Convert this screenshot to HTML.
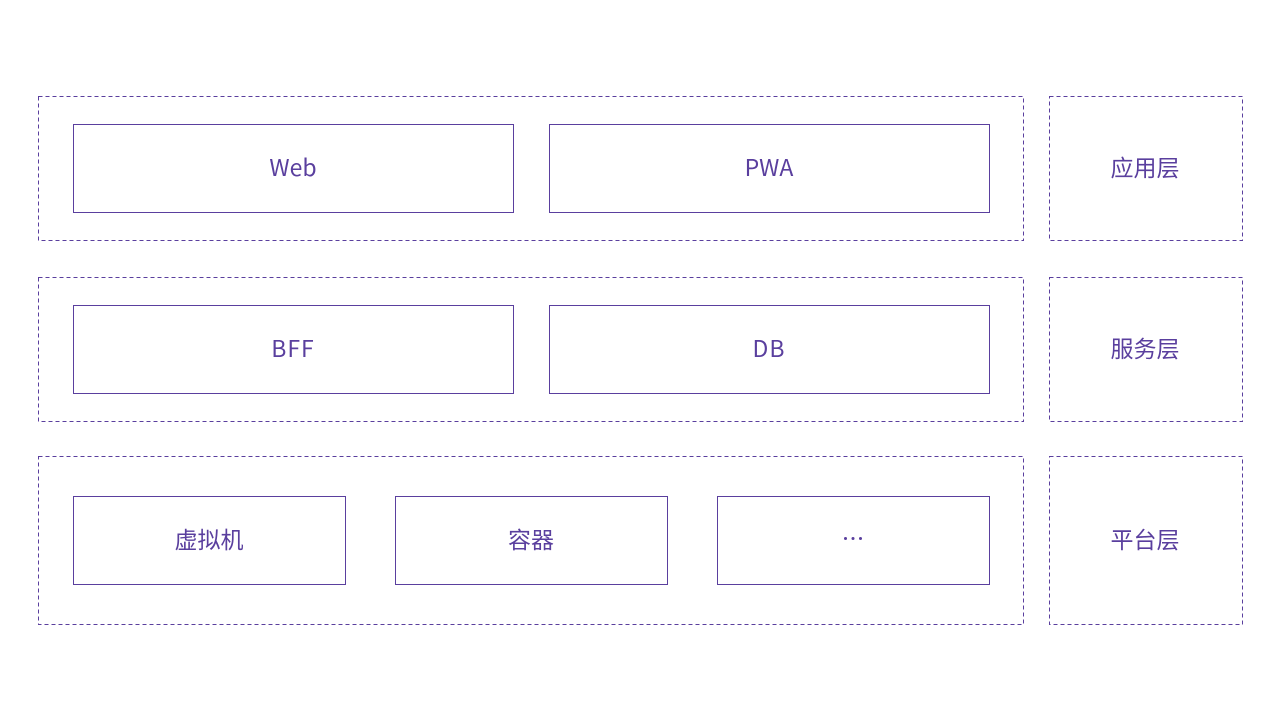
<!DOCTYPE html>
<html><head><meta charset="utf-8"><style>
html,body{margin:0;padding:0;background:#fff;}
svg{display:block}
text{font-family:"Noto Sans CJK SC","Liberation Sans",sans-serif;font-size:23px;fill:#5a3f9e;text-anchor:middle;dominant-baseline:central;font-weight:400}
.d{fill:none;stroke:#5a3f9e;stroke-width:1;stroke-dasharray:4 3}
.s{fill:none;stroke:#5a3f9e;stroke-width:1}
</style></head><body>
<svg width="1280" height="720" viewBox="0 0 1280 720">
<rect class="d" x="38.5" y="96.5" width="985" height="144"/>
<rect class="d" x="1049.5" y="96.5" width="193" height="144"/>
<rect class="d" x="38.5" y="277.5" width="985" height="144"/>
<rect class="d" x="1049.5" y="277.5" width="193" height="144"/>
<rect class="d" x="38.5" y="456.5" width="985" height="168"/>
<rect class="d" x="1049.5" y="456.5" width="193" height="168"/>

<rect class="s" x="73.5" y="124.5" width="440" height="88"/>
<rect class="s" x="549.5" y="124.5" width="440" height="88"/>
<rect class="s" x="73.5" y="305.5" width="440" height="88"/>
<rect class="s" x="549.5" y="305.5" width="440" height="88"/>
<rect class="s" x="73.5" y="496.5" width="272" height="88"/>
<rect class="s" x="395.5" y="496.5" width="272" height="88"/>
<rect class="s" x="717.5" y="496.5" width="272" height="88"/>

<text x="293" y="166">Web</text>
<text x="769" y="166">PWA</text>
<text x="293" y="347" letter-spacing="1">BFF</text>
<text x="769" y="347" letter-spacing="1">DB</text>
<text x="209" y="538">虚拟机</text>
<text x="531" y="538">容器</text>
<circle cx="845.5" cy="538.5" r="1.5" fill="#5a3f9e"/>
<circle cx="853" cy="538.5" r="1.5" fill="#5a3f9e"/>
<circle cx="860.5" cy="538.5" r="1.5" fill="#5a3f9e"/>
<text x="1145" y="166">应用层</text>
<text x="1145" y="347">服务层</text>
<text x="1145" y="538">平台层</text>
</svg>
</body></html>
